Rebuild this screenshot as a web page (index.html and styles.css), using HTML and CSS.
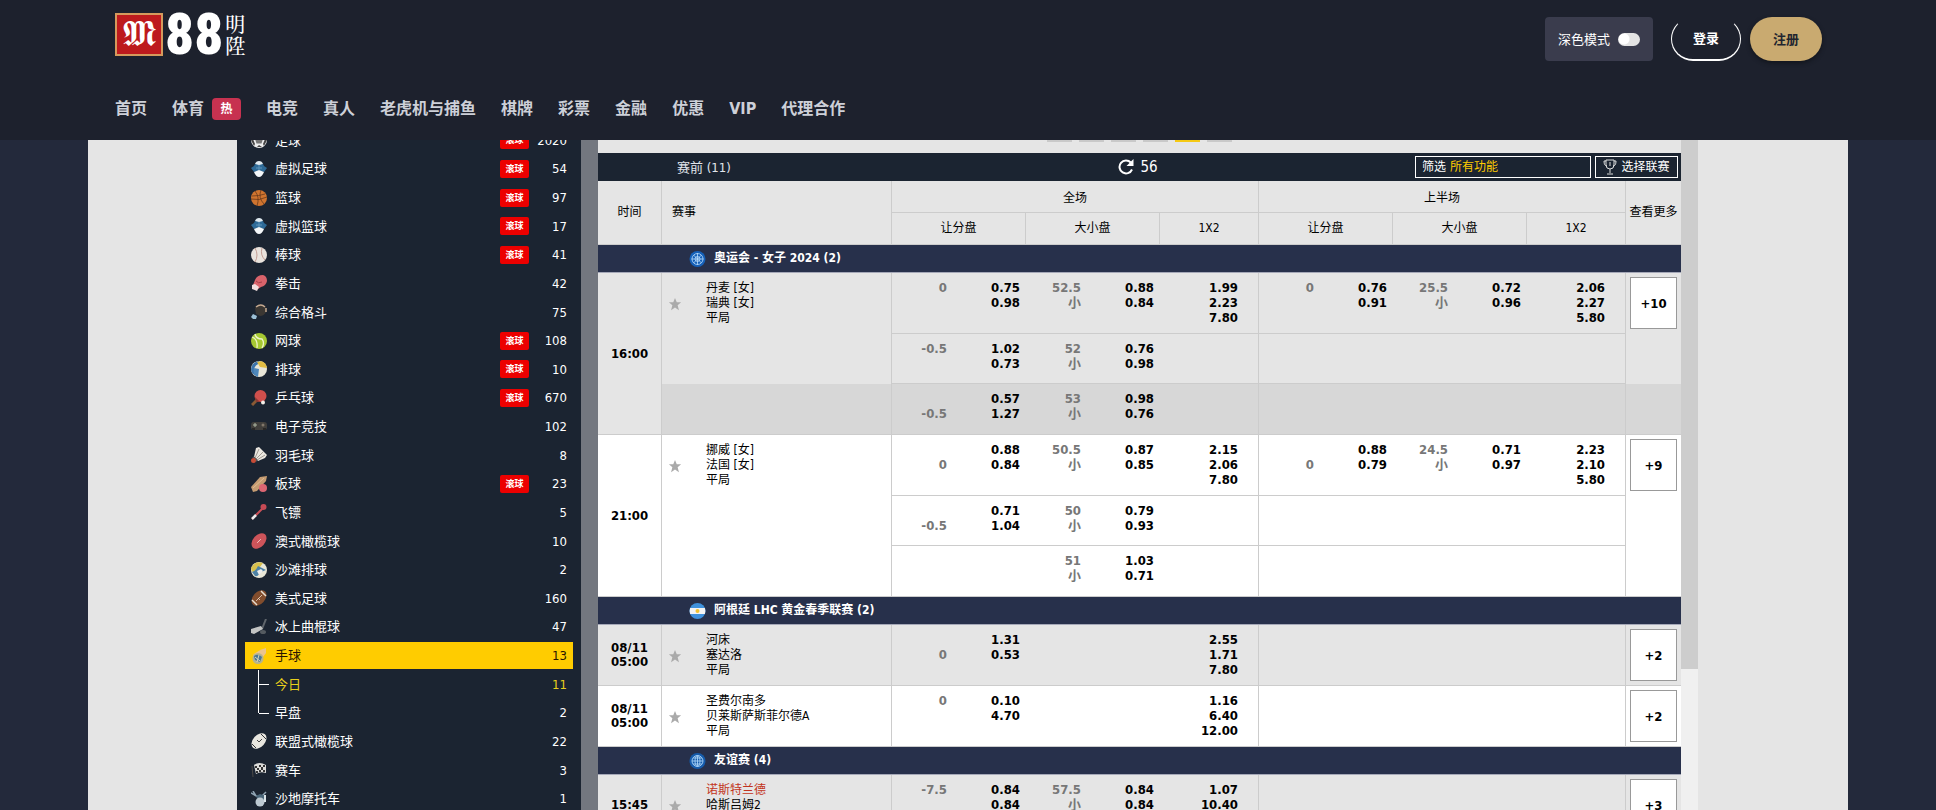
FILE: index.html
```html
<!DOCTYPE html>
<html lang="zh-CN">
<head>
<meta charset="utf-8">
<title>M88 明陞 - 手球</title>
<link rel="stylesheet" href="styles.css">
</head>
<body>
<svg class="sprite" aria-hidden="true">
  <defs>
    <symbol id="soccer" viewBox="0 0 16 16"><circle cx="8" cy="8" r="8" fill="#eee"/><path d="M8 4l4 3-1.500 4.500h-5L4 7z" fill="#777"/><path d="M0 8l2-1 2 5-1 2zM16 8l-2-1-2 5 1 2zM6 15l2-2 3 2z" fill="#444"/></symbol>
    <symbol id="virtual" viewBox="0 0 16 16"><path d="M4 3Q5 0 8 0t4 3l-4 3z" fill="#dfe9f0"/><path d="M4 3l4 1 4-1 1 2 3 2-3 4-3-1-2 1-2-1-3 1-3-4 3-2z" fill="#2e6a97"/><path d="M3 11l5-2 5 2q-2 5-5 5t-5-5z" fill="#f4f7f9"/><path d="M8 4v5M5 7h6" stroke="#5f95bb"/></symbol>
    <symbol id="basket" viewBox="0 0 16 16"><circle cx="8" cy="8" r="8" fill="#cf742f"/><path d="M1 6q7 0 13-2M0 9q8 2 16-2M4 1q5 6 2 15M10 0q-3 8 3 14" fill="none" stroke="#5d3218" stroke-width=".7"/></symbol>
    <symbol id="baseball" viewBox="0 0 16 16"><circle cx="8" cy="8" r="8" fill="#e9e3dd"/><path d="M4 1q4 7 0 14M11 1q-2 7 3 12" fill="none" stroke="#b98a80" stroke-width=".8"/></symbol>
    <symbol id="boxing" viewBox="0 0 16 16"><path d="M4 5Q6 0 12 0q4 1 4 6-1 5-6 6l-3 2-5-4z" fill="#d9636b"/><path d="M1 10l3-1 4 3-2 4-5-2z" fill="#f2dede"/><path d="M5 6q2 3 6 1" fill="none" stroke="#a63e48"/></symbol>
    <symbol id="mma" viewBox="0 0 16 16"><path d="M4 4Q7 0 12 1q4 2 3 7-2 4-6 4l-4-2z" fill="#3b3733"/><path d="M5 3q5-4 9 0M15 4v4" fill="none" stroke="#c6aa91" stroke-width="1.500"/><path d="M2 10l4 2-1 3H2l-2-2z" fill="#9cc0d6"/></symbol>
    <symbol id="tennis" viewBox="0 0 16 16"><circle cx="8" cy="8" r="8" fill="#a6c832"/><path d="M4 1q1 5 7 5 3 4 0 9M1 4q6 2 5 11" fill="none" stroke="#eef4c8" stroke-width="1.300"/></symbol>
    <symbol id="volley" viewBox="0 0 16 16"><circle cx="8" cy="8" r="8" fill="#e9e6d8"/><path d="M0 8Q1 1 8 0l1 2q-5 2-6 6l3 7Q0 13 0 8z" fill="#3c74ab"/><path d="M6 1q8-3 10 6l-7-1z" fill="#e2bd43"/><path d="M3 7l5 1-1 8q-6-2-4-9z" fill="#4e87bb"/></symbol>
    <symbol id="pingpong" viewBox="0 0 16 16"><path d="M1 15l5-5" stroke="#8a5a35" stroke-width="3"/><circle cx="9.500" cy="6" r="6" fill="#cf4f4c"/><path d="M4 7l5 5-4 0z" fill="#8c3a33"/><circle cx="12" cy="12.500" r="2" fill="#f3eee8"/></symbol>
    <symbol id="esport" viewBox="0 0 16 16"><rect y="3" width="16" height="8" rx="3" fill="#413f3c"/><path d="M2 6h4M4 4v4" stroke="#aeb7a2"/><circle cx="12" cy="6" r="1.500" fill="#81776a"/><path d="M1 10h3M12 10h3" stroke="#292725" stroke-width="2"/></symbol>
    <symbol id="shuttle" viewBox="0 0 16 16"><path d="M3 10L5 1l3-1 8 8-2 3-7 3z" fill="#ece8e1"/><path d="M4 11L8 2M5 12l7-7M6 13l8-5" stroke="#8d857d" stroke-width=".8"/><path d="M2 10l4 4" stroke="#555" stroke-width="2"/><circle cx="2.500" cy="13.500" r="2.500" fill="#c64c37"/></symbol>
    <symbol id="cricket" viewBox="0 0 16 16"><path d="M0 11L9 1l7-1-1 5-9 10-4 1z" fill="#c59c72"/><path d="M2 12L13 2" stroke="#e1bd92"/><circle cx="12" cy="12" r="4" fill="#dc6672"/></symbol>
    <symbol id="dart" viewBox="0 0 16 16"><path d="M1 15L12 4" stroke="#c95058" stroke-width="2"/><circle cx="12.500" cy="3" r="3" fill="#c74b55"/><path d="M1 15l4-4" stroke="#eee" stroke-width="2.500"/></symbol>
    <symbol id="aussie" viewBox="0 0 16 16"><ellipse cx="8" cy="8" rx="9" ry="6" transform="rotate(-48 8 8)" fill="#cd545a"/><path d="M6 10l4-4M7 8l1 1M8 7l1 1" stroke="#f3c9c5" stroke-width=".8"/></symbol>
    <symbol id="beach" viewBox="0 0 16 16"><circle cx="8" cy="8" r="8" fill="#e9e7d7"/><path d="M0 6Q4-2 12 1l-3 4-6 6Q0 9 0 6z" fill="#d7c04d"/><path d="M1 10q4-1 6-6l8 4-5 2q-3 5-6 4z" fill="#4e82a5"/><path d="M6 9l4-2 2 2-4 4z" fill="#eee"/></symbol>
    <symbol id="football" viewBox="0 0 16 16"><ellipse cx="8" cy="8" rx="9" ry="6" transform="rotate(-48 8 8)" fill="#824d2d"/><path d="M10 1l5 5M1 10l5 5" stroke="#e8ded1" stroke-width="1.500"/><path d="M5 11l6-6M7 8l2 2" stroke="#ecdccb" stroke-width=".8"/></symbol>
    <symbol id="hockey" viewBox="0 0 16 16"><path d="M15 0l-4 10" stroke="#60666c" stroke-width="2"/><path d="M0 10l10-3 2 3-9 5-3-1z" fill="#c3c4c3"/><ellipse cx="12" cy="13" rx="3" ry="2" fill="#555b60"/></symbol>
    <symbol id="handball" viewBox="0 0 16 16"><path d="M2 7Q6 3 15 0v5l-3 4-7 2z" fill="#ebc48e"/><circle cx="7" cy="10.500" r="5.500" fill="#b7b48d"/><path d="M3 8q4-3 8 1l-2 5-5-2z" fill="#4b7795"/><path d="M4 9l5 4M8 7l-2 7" stroke="#d4d5bf"/></symbol>
    <symbol id="rugby" viewBox="0 0 16 16"><ellipse cx="8" cy="8" rx="9" ry="6" transform="rotate(-48 8 8)" fill="#e8e6df"/><path d="M10 1l5 5M1 11l4 4" stroke="#313336" stroke-width="1"/><path d="M6 7l2 2 3-3" fill="none" stroke="#444"/></symbol>
    <symbol id="flag" viewBox="0 0 16 16"><path d="M1 4l1 11" stroke="#4a4846"/><path d="M3 3q5-4 12 0v8q-6-2-10 1z" fill="#dcdcda"/><path d="M4 4h2v2H4zM8 3h2v2H8zM12 3h2v2h-2zM6 6h2v2H6zM10 5h2v3h-2zM8 8h2v2H8zM12 8h2v2h-2zM5 9h2v2H5z" fill="#353535"/></symbol>
    <symbol id="moto" viewBox="0 0 16 16"><path d="M0 2l7 4M15 1l-5 5M2 0l3 5" stroke="#8fa3b2" stroke-width="1.500"/><path d="M5 5l4-2 6 2-1 5-6 1z" fill="#4b677a"/><circle cx="9" cy="11" r="4.500" fill="#bdc9d1"/><path d="M14 4v7" stroke="#dbe4e8" stroke-width="2"/></symbol>
    <symbol id="star" viewBox="0 0 16 16"><path d="M8 1l2 5h5l-4 3.500 1.500 5.500L8 12l-4.500 3L5 9.500 1 6h5z" fill="#aaa"/></symbol>
    <symbol id="globe" viewBox="0 0 16 16"><circle cx="8" cy="8" r="8" fill="#155bab"/><g fill="none" stroke="#a7d0f5" stroke-width=".9"><circle cx="8" cy="8" r="5.500"/><ellipse cx="8" cy="8" rx="2.500" ry="5.500"/><path d="M2.500 8h11M3.500 5h9M3.500 11h9M8 2.500v11"/></g></symbol>
    <symbol id="olympic" viewBox="0 0 16 16"><circle cx="8" cy="8" r="8" fill="#1560b8"/><g fill="none" stroke="#b9dcfb" stroke-width=".8"><circle cx="8" cy="8" r="5.500"/><path d="M8 2v12M2 8h12M4 4l8 8M12 4l-8 8"/><circle cx="8" cy="8" r="2.500"/></g></symbol>
    <symbol id="argentina" viewBox="0 0 16 16"><circle cx="8" cy="8" r="8" fill="#3f91dc"/><path fill="#f3f3f3" d="M.6 5h14.800q1 3 0 6H.6q-1-3 0-6z"/><circle cx="8" cy="8" r="2" fill="#f2c230"/></symbol>
  </defs>
</svg>

<header class="header">
  <div class="header-inner">
    <div class="top">
      <a class="logo" href="#" aria-label="M88 明陞">
        <span class="logo-m">𝕸</span><span class="logo-88">88</span><span class="logo-cn"><span>明</span><span>陞</span></span>
      </a>
      <div class="actions">
        <label class="mode">深色模式<input type="checkbox" class="toggle"></label>
        <button class="login">登录</button>
        <button class="register">注册</button>
      </div>
    </div>
    <nav class="nav">
      <a href="#">首页</a>
      <a href="#">体育<span class="hot">热</span></a>
      <a href="#">电竞</a>
      <a href="#">真人</a>
      <a href="#">老虎机与捕鱼</a>
      <a href="#">棋牌</a>
      <a href="#">彩票</a>
      <a href="#">金融</a>
      <a href="#">优惠</a>
      <a href="#">VIP</a>
      <a href="#">代理合作</a>
    </nav>
  </div>
</header>

<div class="page">
  <div class="layout">
    <aside class="sidebar">
      <ul class="sports">
        <li><svg class="icon"><use href="#soccer"/></svg><span class="name">足球</span><span class="live">滚球</span><span class="count">2020</span></li>
        <li><svg class="icon"><use href="#virtual"/></svg><span class="name">虚拟足球</span><span class="live">滚球</span><span class="count">54</span></li>
        <li><svg class="icon"><use href="#basket"/></svg><span class="name">篮球</span><span class="live">滚球</span><span class="count">97</span></li>
        <li><svg class="icon"><use href="#virtual"/></svg><span class="name">虚拟篮球</span><span class="live">滚球</span><span class="count">17</span></li>
        <li><svg class="icon"><use href="#baseball"/></svg><span class="name">棒球</span><span class="live">滚球</span><span class="count">41</span></li>
        <li><svg class="icon"><use href="#boxing"/></svg><span class="name">拳击</span><span class="count">42</span></li>
        <li><svg class="icon"><use href="#mma"/></svg><span class="name">综合格斗</span><span class="count">75</span></li>
        <li><svg class="icon"><use href="#tennis"/></svg><span class="name">网球</span><span class="live">滚球</span><span class="count">108</span></li>
        <li><svg class="icon"><use href="#volley"/></svg><span class="name">排球</span><span class="live">滚球</span><span class="count">10</span></li>
        <li><svg class="icon"><use href="#pingpong"/></svg><span class="name">乒乓球</span><span class="live">滚球</span><span class="count">670</span></li>
        <li><svg class="icon"><use href="#esport"/></svg><span class="name">电子竞技</span><span class="count">102</span></li>
        <li><svg class="icon"><use href="#shuttle"/></svg><span class="name">羽毛球</span><span class="count">8</span></li>
        <li><svg class="icon"><use href="#cricket"/></svg><span class="name">板球</span><span class="live">滚球</span><span class="count">23</span></li>
        <li><svg class="icon"><use href="#dart"/></svg><span class="name">飞镖</span><span class="count">5</span></li>
        <li><svg class="icon"><use href="#aussie"/></svg><span class="name">澳式橄榄球</span><span class="count">10</span></li>
        <li><svg class="icon"><use href="#beach"/></svg><span class="name">沙滩排球</span><span class="count">2</span></li>
        <li><svg class="icon"><use href="#football"/></svg><span class="name">美式足球</span><span class="count">160</span></li>
        <li><svg class="icon"><use href="#hockey"/></svg><span class="name">冰上曲棍球</span><span class="count">47</span></li>
        <li class="active"><svg class="icon"><use href="#handball"/></svg><span class="name">手球</span><span class="count">13</span></li>
        <li class="sub today"><span class="branch"></span><span class="name">今日</span><span class="count">11</span></li>
        <li class="sub last"><span class="branch"></span><span class="name">早盘</span><span class="count">2</span></li>
        <li><svg class="icon"><use href="#rugby"/></svg><span class="name">联盟式橄榄球</span><span class="count">22</span></li>
        <li><svg class="icon"><use href="#flag"/></svg><span class="name">赛车</span><span class="count">3</span></li>
        <li><svg class="icon"><use href="#moto"/></svg><span class="name">沙地摩托车</span><span class="count">1</span></li>
      </ul>
    </aside>

    <main class="content">
      <div class="pager"><i></i><i></i><i></i><i></i><i class="on"></i><i></i></div>
      <div class="bar">
        <span class="bar-title">赛前 (11)</span>
        <button class="refresh"><svg viewBox="0 0 16 16"><path d="M14 10.500A6.500 6.500 0 1 1 12.800 3.500" fill="none" stroke="#fff" stroke-width="2"/><path d="M15.500 0v7H8.500z" fill="#fff"/></svg>56</button>
        <div class="bar-tools">
          <label class="filter">筛选
            <select><option>所有功能</option></select>
          </label>
          <button class="choose"><svg viewBox="0 0 14 16"><path d="M3 1h8v5q0 4-4 4T3 6zM3 2H1q0 5 3 5M11 2h2q0 5-3 5M7 10v4M4 15h6M7 3v4" fill="none" stroke="#ddd"/></svg>选择联赛</button>
        </div>
      </div>

      <table class="odds">
        <colgroup>
          <col class="c-time"><col><col class="c-pair"><col class="c-pair"><col class="c-win"><col class="c-pair"><col class="c-pair"><col class="c-win"><col class="c-more">
        </colgroup>
        <thead>
          <tr class="top-head"><th rowspan="2">时间</th><th rowspan="2" class="event-head">赛事</th><th colspan="3">全场</th><th colspan="3">上半场</th><th rowspan="2" class="more-head">查看更多</th></tr>
          <tr class="sub-head"><th>让分盘</th><th>大小盘</th><th>1X2</th><th>让分盘</th><th>大小盘</th><th>1X2</th></tr>
        </thead>
        <tbody>
          <tr class="league"><th colspan="9"><div><svg class="badge"><use href="#olympic"/></svg>奥运会 - 女子 2024 (2)</div></th></tr>
        </tbody>
        <tbody class="grey">
          <tr class="first">
            <td rowspan="3" class="time">16:00</td>
            <td class="event"><div><svg class="star"><use href="#star"/></svg><span>丹麦 [女]<br>瑞典 [女]<br>平局</span></div></td>
            <td><div class="pair"><span>0</span><b>0.75<br>0.98</b></div></td>
            <td><div class="pair"><span>52.5<br>小</span><b>0.88<br>0.84</b></div></td>
            <td class="win">1.99<br>2.23<br>7.80</td>
            <td><div class="pair"><span>0</span><b>0.76<br>0.91</b></div></td>
            <td><div class="pair"><span>25.5<br>小</span><b>0.72<br>0.96</b></div></td>
            <td class="win">2.06<br>2.27<br>5.80</td>
            <td class="more"><button>+10</button></td>
          </tr>
          <tr>
            <td class="event"></td>
            <td><div class="pair"><span>-0.5</span><b>1.02<br>0.73</b></div></td>
            <td><div class="pair"><span>52<br>小</span><b>0.76<br>0.98</b></div></td>
            <td class="win"></td><td></td><td></td><td class="win"></td><td class="more"></td>
          </tr>
          <tr class="hover end">
            <td class="event"></td>
            <td><div class="pair"><span><br>-0.5</span><b>0.57<br>1.27</b></div></td>
            <td><div class="pair"><span>53<br>小</span><b>0.98<br>0.76</b></div></td>
            <td class="win"></td><td></td><td></td><td class="win"></td><td class="more"></td>
          </tr>
        </tbody>
        <tbody>
          <tr class="first">
            <td rowspan="3" class="time">21:00</td>
            <td class="event"><div><svg class="star"><use href="#star"/></svg><span>挪威 [女]<br>法国 [女]<br>平局</span></div></td>
            <td><div class="pair"><span><br>0</span><b>0.88<br>0.84</b></div></td>
            <td><div class="pair"><span>50.5<br>小</span><b>0.87<br>0.85</b></div></td>
            <td class="win">2.15<br>2.06<br>7.80</td>
            <td><div class="pair"><span><br>0</span><b>0.88<br>0.79</b></div></td>
            <td><div class="pair"><span>24.5<br>小</span><b>0.71<br>0.97</b></div></td>
            <td class="win">2.23<br>2.10<br>5.80</td>
            <td class="more"><button>+9</button></td>
          </tr>
          <tr>
            <td class="event"></td>
            <td><div class="pair"><span><br>-0.5</span><b>0.71<br>1.04</b></div></td>
            <td><div class="pair"><span>50<br>小</span><b>0.79<br>0.93</b></div></td>
            <td class="win"></td><td></td><td></td><td class="win"></td><td class="more"></td>
          </tr>
          <tr class="end">
            <td class="event"></td>
            <td></td>
            <td><div class="pair"><span>51<br>小</span><b>1.03<br>0.71</b></div></td>
            <td class="win"></td><td></td><td></td><td class="win"></td><td class="more"></td>
          </tr>
        </tbody>
        <tbody>
          <tr class="league"><th colspan="9"><div><svg class="badge"><use href="#argentina"/></svg>阿根廷 LHC 黄金春季联赛 (2)</div></th></tr>
        </tbody>
        <tbody class="grey">
          <tr class="single end">
            <td class="time">08/11<br>05:00</td>
            <td class="event"><div><svg class="star"><use href="#star"/></svg><span>河床<br>塞达洛<br>平局</span></div></td>
            <td><div class="pair"><span><br>0</span><b>1.31<br>0.53</b></div></td>
            <td></td>
            <td class="win">2.55<br>1.71<br>7.80</td>
            <td></td><td></td><td class="win"></td>
            <td class="more"><button>+2</button></td>
          </tr>
        </tbody>
        <tbody>
          <tr class="single end">
            <td class="time">08/11<br>05:00</td>
            <td class="event"><div><svg class="star"><use href="#star"/></svg><span>圣费尔南多<br>贝莱斯萨斯菲尔德A<br>平局</span></div></td>
            <td><div class="pair"><span>0</span><b>0.10<br>4.70</b></div></td>
            <td></td>
            <td class="win">1.16<br>6.40<br>12.00</td>
            <td></td><td></td><td class="win"></td>
            <td class="more"><button>+2</button></td>
          </tr>
        </tbody>
        <tbody>
          <tr class="league"><th colspan="9"><div><svg class="badge"><use href="#globe"/></svg>友谊赛 (4)</div></th></tr>
        </tbody>
        <tbody class="grey">
          <tr class="single end">
            <td class="time">15:45</td>
            <td class="event"><div><svg class="star"><use href="#star"/></svg><span><em>诺斯特兰德</em><br>哈斯吕姆2<br>平局</span></div></td>
            <td><div class="pair"><span>-7.5</span><b>0.84<br>0.84</b></div></td>
            <td><div class="pair"><span>57.5<br>小</span><b>0.84<br>0.84</b></div></td>
            <td class="win">1.07<br>10.40</td>
            <td></td><td></td><td class="win"></td>
            <td class="more"><button>+3</button></td>
          </tr>
        </tbody>
      </table>
    </main>
    <div class="scroll"><div class="thumb"></div></div>
  </div>
</div>
</body>
</html>
```
FILE: styles.css
```css
* { box-sizing: border-box; }

body {
  margin: 0;
  height: 100vh;
  display: flex;
  flex-direction: column;
  overflow: hidden;
  background: #23293b;
  color: #000;
  font: 12px/15px "DejaVu Sans Condensed", "Noto Sans CJK SC", sans-serif;
}

button, select { font: inherit; color: inherit; margin: 0; padding: 0; }
button { cursor: pointer; }
.sprite { display: none; }

/* Site header */
.header { flex: none; background: #1d212d; color: #fff; }
.header-inner { max-width: 1760px; height: 140px; margin: 0 auto; padding: 13px 26px 0 27px; }
.top { display: flex; justify-content: space-between; height: 76px; }

.logo { display: flex; align-items: flex-start; height: 43px; gap: 2px; color: #fff; text-decoration: none; }
.logo-m {
  width: 48px;
  height: 43px;
  border: 2px solid #d59a5c;
  background: #bd1a1d;
  font: 36px/38px "DejaVu Sans", sans-serif;
  text-align: center;
}
.logo-88 { font: 900 57px/44px "Roboto Condensed", "Open Sans Condensed", "Liberation Sans", sans-serif; }
.logo-cn { display: flex; flex-direction: column; font: 500 20px/22px "Noto Serif CJK SC", "Noto Sans CJK SC", serif; }

.actions { display: flex; align-items: flex-start; padding-top: 4px; font-size: 13px; }
.mode {
  display: flex;
  align-items: center;
  gap: 8px;
  height: 44px;
  padding: 0 13px;
  margin-right: 18px;
  border-radius: 4px;
  background: #3a3c4d;
}
.toggle {
  appearance: none;
  width: 22px;
  height: 13px;
  margin: 0;
  border-radius: 7px;
  background: radial-gradient(circle at 6px 6px, #fff 5px, #e4e4e4 6px);
}
.login, .register { height: 44px; border-radius: 22px; font-weight: bold; }
.login { width: 70px; margin-right: 9px; border: 1px solid #fff; border-top-color: transparent; border-bottom-width: 2px; background: none; }
.register { width: 72px; border: 0; background: #c9aa70; color: #22252f; box-shadow: 0 2px 4px #12151c; }

.nav { display: flex; gap: 25px; font-size: 16px; line-height: 40px; font-weight: bold; }
.nav a { display: flex; align-items: center; color: #cdd0d8; text-decoration: none; }
.hot {
  width: 29px;
  margin-left: 8px;
  border-radius: 4px;
  background: #c73250;
  color: #fff;
  font-size: 12px;
  line-height: 22px;
  text-align: center;
}

/* Page frame */
.page { flex: 1; min-height: 0; width: 100%; max-width: 1760px; margin: 0 auto; background: #e5e5e5; overflow: hidden; }
.layout { display: flex; height: 100%; max-width: 1462px; margin: 0 auto; padding-right: 1px; }

/* Sport list */
.sidebar { flex: none; width: 361px; border-right: 17px solid #73777f; background: #1b2431; color: #fff; }
.sports {
  display: grid;
  grid-auto-rows: 1fr;
  height: 687px;
  margin: -14px 0 0;
  padding: 0 8px;
  list-style: none;
  font-size: 13px;
}
.sports li { display: flex; align-items: center; margin: 1px 0; padding: 0 6px; }
.icon { width: 16px; height: 16px; margin-right: 8px; }
.name { flex: 1; }
.live {
  width: 29px;
  border-radius: 2px;
  background: #ec0000;
  font-size: 9px;
  line-height: 18px;
  font-weight: bold;
  text-align: center;
}
.count { width: 38px; text-align: right; }
.sports .active { background: #fc0; color: #2a1500; }
.sports .today { color: #e8cf1c; }
.sports .sub { margin: 0; }
.branch { position: relative; align-self: stretch; width: 10px; margin: 0 7px; border-left: 1px solid #fff; }
.branch::after { content: ""; position: absolute; left: 0; top: 50%; width: 10px; border-top: 1px solid #fff; }
.last .branch { align-self: flex-start; height: 50%; }
.last .branch::after { top: 100%; }

/* Odds panel */
.content { flex: 1; min-width: 0; }
.pager { display: flex; justify-content: center; gap: 7px; height: 13px; }
.pager i { width: 25px; height: 2px; background: #c9c9c9; }
.pager .on { background: #f5c913; }

.bar {
  display: grid;
  grid-template-columns: 1fr auto 1fr;
  align-items: center;
  height: 28px;
  padding: 0 3px 0 0;
  background: #1b2431;
  color: #fff;
  font-size: 13px;
}
.bar-title { padding-left: 79px; color: #e1e5ec; }
.refresh { display: flex; align-items: center; gap: 6px; border: 0; background: none; font-size: 15px; }
.refresh svg { width: 16px; height: 16px; }
.bar-tools { display: flex; justify-content: flex-end; gap: 4px; font-size: 12px; }
.filter, .choose { display: flex; align-items: center; height: 22px; border: 1px solid #fff; }
.filter { width: 176px; padding-left: 6px; gap: 4px; }
.filter select { flex: 1; appearance: none; border: 0; background: none; color: #fc0; }
.choose { width: 83px; justify-content: center; gap: 4px; background: none; }
.choose svg { width: 14px; height: 16px; }

.odds { width: 100%; table-layout: fixed; border-collapse: separate; border-spacing: 0; background: #fff; }
.c-time { width: 64px; }
.c-pair { width: 134px; }
.c-win { width: 99px; }
.c-more { width: 55px; }

.odds td, .odds th { padding: 0; border-right: 1px solid #ccc; border-bottom: 1px solid #ccc; }
.odds tr > :last-child { border-right: 0; }
.odds thead th { height: 32px; background: #e5e5e5; font-weight: normal; text-align: center; }
.odds .top-head th[colspan] { padding-top: 3px; }
.odds .sub-head th { border-right: 1px solid #ccc; }
.odds thead .event-head { padding-left: 10px; text-align: left; }
.odds thead .more-head { white-space: nowrap; }

.odds .league th { height: 28px; border-bottom-color: #a5a8b8; background: #27304b; color: #fff; text-align: left; }
.league div { display: flex; align-items: center; gap: 8px; padding-left: 91px; }
.badge { width: 17px; height: 16px; }

.grey td { background: #e5e5e5; }
.grey .hover td:not(.time) { background: #d7d7d7; }
.odds td { height: 50px; padding-top: 7px; vertical-align: top; font-size: 13px; }
.odds .first td { height: 61px; }
.odds .end td { height: 51px; }
.odds .single td { height: 61px; }
.odds tr td.time { padding: 0; vertical-align: middle; font-weight: bold; line-height: 14px; text-align: center; }
.odds tr:not(.end) td.event, .odds tr:not(.end) td.more { border-bottom: 0; }
.odds td:nth-last-child(9), .odds td:nth-last-child(8), .odds td.win { border-right: 1px solid #ccc; }
.odds td:nth-last-child(7), .odds td:nth-last-child(6), .odds td:nth-last-child(4), .odds td:nth-last-child(3) { border-right: 0; }

.odds .event { padding-top: 8px; }
.event div { display: flex; align-items: center; gap: 24px; padding-left: 6px; font-size: 12px; }
.event em { color: #c23420; font-style: normal; }
.star { width: 14px; height: 14px; }
.pair { display: grid; grid-template-columns: 55px 1fr; padding-right: 6px; text-align: right; }
.pair span { color: #777; font-weight: bold; }
.odds .win { padding-right: 20px; font-weight: bold; text-align: right; }
.odds .more { padding: 4px 4px 0; }
.more button { display: block; width: 47px; height: 52px; border: 1px solid #999; background: #fff; font-weight: bold; }

.scroll { flex: none; width: 17px; background: #f0f0f0; }
.thumb { height: 79%; background: #cdcdcd; }
```
